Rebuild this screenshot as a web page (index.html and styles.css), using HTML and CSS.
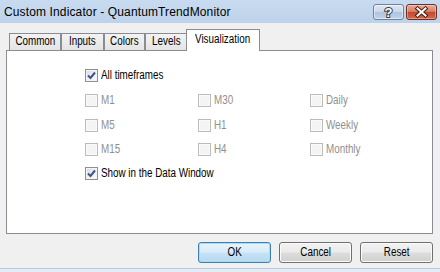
FILE: index.html
```html
<!DOCTYPE html>
<html>
<head>
<meta charset="utf-8">
<link rel="stylesheet" href="styles.css">
</head>
<body>
<div class="window">
  <div class="titlebar">
    <span class="title">Custom Indicator - QuantumTrendMonitor</span>
    <div class="caption-btns">
      <div class="cbtn help">
        <svg width="29" height="14" viewBox="0 0 29 14"><text x="14.5" y="12" text-anchor="middle" class="qmark">?</text></svg>
      </div>
      <div class="cbtn close">
        <svg width="29" height="14" viewBox="0 0 29 14">
          <path d="M10.5 3.5 L18.5 10.5 M18.5 3.5 L10.5 10.5" stroke="#4a1a10" stroke-width="4" stroke-linecap="square" fill="none"/>
          <path d="M10.5 3.5 L18.5 10.5 M18.5 3.5 L10.5 10.5" stroke="#ffffff" stroke-width="2" stroke-linecap="square" fill="none"/>
        </svg>
      </div>
    </div>
  </div>
  <div class="client">
    <div class="tabs">
      <div class="tab w-common"><span class="nt">Common</span></div>
      <div class="tab w-inputs"><span class="nt">Inputs</span></div>
      <div class="tab w-colors"><span class="nt">Colors</span></div>
      <div class="tab w-levels"><span class="nt">Levels</span></div>
      <div class="tab active"><span class="nt">Visualization</span></div>
    </div>
    <div class="panel">
      <div class="grid">
        <label class="item span-all"><span class="cb checked"><svg width="11" height="11" viewBox="0 0 11 11"><path d="M2 5.5 L4.5 8 L9 2.5" stroke="#3b5595" stroke-width="2" fill="none"/></svg></span><span class="lbl nt">All timeframes</span></label>
        <label class="item disabled"><span class="cb"></span><span class="lbl nt">M1</span></label>
        <label class="item disabled"><span class="cb"></span><span class="lbl nt">M30</span></label>
        <label class="item disabled"><span class="cb"></span><span class="lbl nt">Daily</span></label>
        <label class="item disabled"><span class="cb"></span><span class="lbl nt">M5</span></label>
        <label class="item disabled"><span class="cb"></span><span class="lbl nt">H1</span></label>
        <label class="item disabled"><span class="cb"></span><span class="lbl nt">Weekly</span></label>
        <label class="item disabled"><span class="cb"></span><span class="lbl nt">M15</span></label>
        <label class="item disabled"><span class="cb"></span><span class="lbl nt">H4</span></label>
        <label class="item disabled"><span class="cb"></span><span class="lbl nt">Monthly</span></label>
        <label class="item span-all"><span class="cb checked"><svg width="11" height="11" viewBox="0 0 11 11"><path d="M2 5.5 L4.5 8 L9 2.5" stroke="#3b5595" stroke-width="2" fill="none"/></svg></span><span class="lbl nt">Show in the Data Window</span></label>
      </div>
    </div>
    <div class="buttons">
      <div class="btn default"><span class="nt">OK</span></div>
      <div class="btn"><span class="nt">Cancel</span></div>
      <div class="btn"><span class="nt">Reset</span></div>
    </div>
  </div>
  <div class="frame-bottom"></div>
</div>
</body>
</html>
```
FILE: styles.css
```css
* { box-sizing: border-box; }
html, body { margin: 0; padding: 0; }
body {
  width: 440px;
  height: 272px;
  overflow: hidden;
  background: #f0f0f0;
  font-family: "Liberation Sans", Arial, sans-serif;
  font-size: 12px;
  color: #000;
}
.window { display: flex; flex-direction: column; height: 272px; }

/* narrow text: dialog font is a condensed sans */
.nt { display: inline-block; transform: scaleX(0.82); }
.tab .nt, .btn .nt { transform-origin: center; }
.lbl.nt { transform-origin: left center; }

.titlebar {
  height: 23px;
  background: linear-gradient(#c8dbf0, #bdd3eb);
  display: flex;
  justify-content: space-between;
  align-items: flex-start;
  padding-left: 4px;
}
.title {
  font-size: 12px;
  line-height: 14px;
  margin-top: 5px;
  letter-spacing: 0.13px;
}
.caption-btns { display: flex; gap: 2px; margin-top: 4px; margin-right: 3px; }
.cbtn {
  width: 31px;
  height: 16px;
  border: 1px solid;
  border-radius: 3px;
  display: flex;
}
.help {
  border-color: #6f819d;
  background: linear-gradient(#dfe8f3 0%, #cad8ea 48%, #b1c4dc 52%, #c2d3e8 100%);
  box-shadow: inset 0 0 0 1px rgba(255,255,255,0.5);
}
.close {
  border-color: #6e2f22;
  background: linear-gradient(#e7ab9b 0%, #d6846e 45%, #c4482d 52%, #cf6a4e 100%);
  box-shadow: inset 0 0 0 1px rgba(255,255,255,0.35);
}
.qmark {
  font-size: 13px;
  font-weight: bold;
  fill: #ffffff;
  stroke: #3b3f48;
  stroke-width: 2px;
  paint-order: stroke;
}

.client {
  flex: 1;
  display: flex;
  flex-direction: column;
  padding: 6px 7px 0 6px;
}
.tabs {
  display: flex;
  align-items: flex-end;
  height: 21px;
  padding-left: 3px;
}
.tab {
  height: 17px;
  border: 1px solid #898c95;
  border-bottom: none;
  background: linear-gradient(#f3f3f3, #e4e4e4);
  text-align: center;
  line-height: 15px;
  white-space: nowrap;
}
.w-common { width: 52px; }
.w-inputs { width: 43px; }
.w-colors { width: 41px; }
.w-levels { width: 42px; }
.tab.active {
  width: 74px;
  height: 22px;
  margin-left: -1px;
  margin-bottom: -1px;
  padding-top: 2px;
  background: #fff;
  position: relative;
  z-index: 1;
}

.panel {
  height: 184px;
  border: 1px solid #898c95;
  background: #fff;
  padding: 18px 0 0 78px;
}
.grid {
  display: grid;
  grid-template-columns: 113px 112px auto;
  grid-template-rows: 25px 25px 24px 24px 24px;
}
.item { display: flex; align-items: flex-start; gap: 3px; line-height: 13px; height: 13px; white-space: nowrap; }
.span-all { grid-column: 1 / -1; }
.cb {
  width: 13px;
  height: 13px;
  flex: none;
  border: 1px solid #8e8f8f;
  background: linear-gradient(135deg, #d6d9de 0%, #f0f1f3 60%, #fbfbfb 100%);
  box-shadow: inset 0 0 0 1px #f4f4f4;
  display: flex;
}
.disabled .cb {
  border-color: #bcbcbc;
  background: #f4f4f4;
  box-shadow: inset 0 0 0 1px #fafafa;
}
.disabled .lbl { color: #8f8f8f; }

.buttons {
  display: flex;
  justify-content: flex-end;
  gap: 8px;
  margin-top: 8px;
}
.btn {
  width: 73px;
  height: 21px;
  border: 1px solid #707070;
  border-radius: 3px;
  background: linear-gradient(#f2f2f2 0%, #ebebeb 48%, #dddddd 52%, #cfcfcf 100%);
  box-shadow: inset 0 0 0 1px #fbfbfb;
  text-align: center;
  line-height: 19px;
}
.btn.default {
  border-color: #3c7fb1;
  background: linear-gradient(#e7f3fb 0%, #d9ecf8 48%, #c6e2f5 52%, #b8d9ef 100%);
  box-shadow: inset 0 0 0 1px #a8dcf6;
}
.frame-bottom {
  height: 4px;
  border-top: 1px solid #b4c9e1;
  background: #e4ecf6;
}
```
